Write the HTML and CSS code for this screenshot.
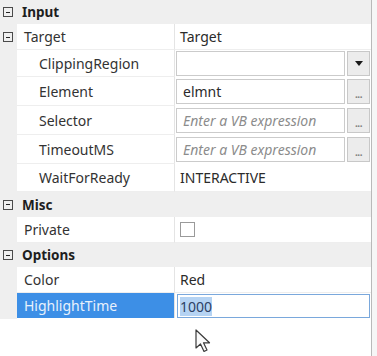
FILE: index.html
```html
<!DOCTYPE html>
<html lang="en">
<head>
  <meta charset="UTF-8" />
  <title>Properties</title>
  <link rel="stylesheet" href="styles.css">
</head>
<body>
  <div class="panel">
    <div class="row cat">
      <span class="gutter"><i class="toggle"></i></span>
      <span class="label">Input</span>
    </div>
    <div class="row">
      <span class="gutter"><i class="toggle"></i></span>
      <span class="name">Target</span>
      <span class="value">Target</span>
    </div>
    <div class="row combo">
      <span class="gutter"></span>
      <span class="name sub">ClippingRegion</span>
      <span class="value editor">
        <span class="box"></span>
        <span class="btn drop"><i class="arrow"></i></span>
      </span>
    </div>
    <div class="row edit">
      <span class="gutter"></span>
      <span class="name sub">Element</span>
      <span class="value editor">
        <span class="box">elmnt</span>
        <span class="btn">...</span>
      </span>
    </div>
    <div class="row edit">
      <span class="gutter"></span>
      <span class="name sub">Selector</span>
      <span class="value editor">
        <span class="box hint">Enter a VB expression</span>
        <span class="btn">...</span>
      </span>
    </div>
    <div class="row edit">
      <span class="gutter"></span>
      <span class="name sub">TimeoutMS</span>
      <span class="value editor">
        <span class="box hint">Enter a VB expression</span>
        <span class="btn">...</span>
      </span>
    </div>
    <div class="row mid">
      <span class="gutter"></span>
      <span class="name sub">WaitForReady</span>
      <span class="value">INTERACTIVE</span>
    </div>
    <div class="row cat misc">
      <span class="gutter"><i class="toggle"></i></span>
      <span class="label">Misc</span>
    </div>
    <div class="row">
      <span class="gutter"></span>
      <span class="name">Private</span>
      <span class="value"><i class="check"></i></span>
    </div>
    <div class="row cat">
      <span class="gutter"><i class="toggle"></i></span>
      <span class="label">Options</span>
    </div>
    <div class="row">
      <span class="gutter"></span>
      <span class="name">Color</span>
      <span class="value">Red</span>
    </div>
    <div class="row selected">
      <span class="gutter"></span>
      <span class="name">HighlightTime</span>
      <span class="value editor">
        <span class="box focus"><span class="sel">1000</span></span>
      </span>
    </div>

    <svg class="pointer" width="17" height="24" viewBox="0 0 17 24">
      <path d="M1 1 L1 19 L5.5 15 L9 22.5 L12 21 L8.5 13.8 L14.5 13.8 Z" fill="#fafafa" stroke="#3a3a3a" stroke-width="1.2" stroke-linejoin="round"/>
    </svg>
  </div>
</body>
</html>
```

FILE: styles.css
```css
body {
  margin: 0;
  background: #f6f6f6;
  font-family: 'Noto Sans', sans-serif;
  font-size: 14px;
  color: #2b2b2b;
}
.panel {
  position: relative;
  width: 371px;
  height: 356px;
  background: #fff;
  border-right: 1px solid #b9b9b9;
}
.row {
  display: grid;
  grid-template-columns: 17px 158px 1fr;
  height: 26px;
  box-sizing: border-box;
}
.row.combo { height: 27px; }
.row.edit { height: 29px; }
.row.mid { height: 28px; }
.row.cat {
  height: 24px;
  background: #efefef;
}
.row.misc { height: 25px; }
.gutter {
  background: #efefef;
  display: flex;
  align-items: center;
  justify-content: center;
}
.toggle {
  display: block;
  position: relative;
  width: 8px;
  height: 8px;
  border: 1px solid #4a4a4a;
  margin-right: 1px;
}
.toggle::after {
  content: "";
  position: absolute;
  left: 2px;
  top: 3.5px;
  width: 4px;
  height: 1px;
  background: #222;
}
.label {
  grid-column: 2 / 4;
  display: flex;
  align-items: center;
  padding-left: 5px;
  font-size: 13.5px;
  font-weight: bold;
  color: #1e1e1e;
}
.name {
  display: flex;
  align-items: center;
  padding-left: 7px;
  border-right: 1px solid #e4e4e4;
  border-bottom: 1px solid #eeeeee;
  color: #333;
}
.name.sub {
  padding-left: 22px;
}
.value {
  display: flex;
  align-items: center;
  padding-left: 5px;
  border-bottom: 1px solid #eeeeee;
  color: #2b2b2b;
}
.value.editor {
  padding: 0 1px;
  gap: 2px;
  border-bottom: none;
}
.box {
  flex: 1;
  height: 25px;
  box-sizing: border-box;
  display: flex;
  align-items: center;
  padding-left: 6px;
  border: 1px solid #cbcbcb;
  background: #fff;
}
.box.hint {
  font-style: italic;
  color: #8c8c8c;
}
.btn {
  width: 23px;
  height: 25px;
  box-sizing: border-box;
  display: flex;
  align-items: center;
  justify-content: center;
  border: 1px solid #c8c8c8;
  background: #ececec;
  color: #808080;
  font-size: 10px;
  font-weight: bold;
  letter-spacing: -0.5px;
  padding-top: 4px;
}
.btn.drop {
  padding-top: 0;
}
.arrow {
  width: 0;
  height: 0;
  border-left: 4px solid transparent;
  border-right: 4px solid transparent;
  border-top: 5px solid #1a1a1a;
}
.check {
  width: 13px;
  height: 13px;
  border: 1px solid #9a9a9a;
  background: #fff;
}
.row.selected .name {
  background: #3d8fe6;
  color: #e8f1fc;
  border-bottom: none;
  margin-bottom: 1px;
}
.row.selected .editor {
  padding-left: 2px;
  padding-right: 1px;
}
.box.focus {
  height: 24px;
  padding-left: 2px;
  border-color: #7aa8dc;
}
.sel {
  background: #b5d3f3;
  color: #2c4064;
}
.pointer {
  position: absolute;
  left: 195px;
  top: 329px;
}
```
